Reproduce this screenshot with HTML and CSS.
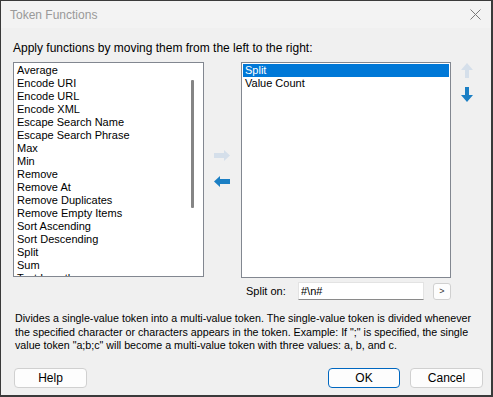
FILE: index.html
```html
<!DOCTYPE html>
<html lang="en">
<head>
    <meta charset="UTF-8">
    <title>Token Functions</title>
    <link rel="stylesheet" href="styles.css">
</head>
<body>
    <div class="window">
        <div class="titlebar">
            <span class="title">Token Functions</span>
            <svg class="close" width="11" height="11" viewBox="0 0 11 11">
                <path d="M0.5 0.5 L10.5 10.5 M10.5 0.5 L0.5 10.5" stroke="#7a7a7a" stroke-width="1" fill="none"/>
            </svg>
        </div>
        <div class="content">
            <div class="intro">Apply functions by moving them from the left to the right:</div>

            <div class="lists">
                <div class="listbox available">
                    <div class="items">
                        <div class="item">Average</div>
                        <div class="item">Encode URI</div>
                        <div class="item">Encode URL</div>
                        <div class="item">Encode XML</div>
                        <div class="item">Escape Search Name</div>
                        <div class="item">Escape Search Phrase</div>
                        <div class="item">Max</div>
                        <div class="item">Min</div>
                        <div class="item">Remove</div>
                        <div class="item">Remove At</div>
                        <div class="item">Remove Duplicates</div>
                        <div class="item">Remove Empty Items</div>
                        <div class="item">Sort Ascending</div>
                        <div class="item">Sort Descending</div>
                        <div class="item">Split</div>
                        <div class="item">Sum</div>
                        <div class="item">Text Length</div>
                    </div>
                    <div class="scrollbar"><div class="thumb"></div></div>
                </div>

                <div class="move-buttons">
                    <svg width="16" height="11" viewBox="0 0 16 11">
                        <polygon points="16,5.5 10,0 10,3 0,3 0,8 10,8 10,11" fill="#d5dfea"/>
                    </svg>
                    <svg width="16" height="11" viewBox="0 0 16 11">
                        <polygon points="0,5.5 6,0 6,3 16,3 16,8 6,8 6,11" fill="#1b7fc4"/>
                    </svg>
                </div>

                <div class="listbox selected-list">
                    <div class="item active">Split</div>
                    <div class="item">Value Count</div>
                </div>

                <div class="order-buttons">
                    <svg width="12" height="15" viewBox="0 0 12 15">
                        <polygon points="6,0 12,7 8,7 8,15 4,15 4,7 0,7" fill="#d5dfea"/>
                    </svg>
                    <svg width="12" height="15" viewBox="0 0 12 15">
                        <polygon points="4,0 8,0 8,8 12,8 6,15 0,8 4,8" fill="#1b7fc4"/>
                    </svg>
                </div>
            </div>

            <div class="split-row">
                <label class="split-label" for="split-on">Split on:</label>
                <input id="split-on" class="split-input" type="text" value="#\n#">
                <button class="small-btn">&gt;</button>
            </div>

            <p class="description">Divides a single-value token into a multi-value token. The single-value token is divided whenever the specified character or characters appears in the token. Example: If ";" is specified, the single value token "a;b;c" will become a multi-value token with three values: a, b, and c.</p>

            <div class="buttons">
                <button class="btn">Help</button>
                <div class="spacer"></div>
                <button class="btn default">OK</button>
                <button class="btn">Cancel</button>
            </div>
        </div>
    </div>
</body>
</html>
```

FILE: styles.css
```css
* {
    box-sizing: border-box;
}
body {
    margin: 0;
    font-family: "Liberation Sans", Arial, sans-serif;
    color: #000;
    background-color: #f0f0f0;
}
.window {
    width: 493px;
    height: 397px;
    border: 1px solid #3a3a3a;
    border-right-width: 2px;
    border-bottom-width: 2px;
    background-color: #f0f0f0;
    display: flex;
    flex-direction: column;
    overflow: hidden;
}
.titlebar {
    flex-shrink: 0;
    height: 27px;
    background-color: #f3f3f3;
    display: flex;
    align-items: center;
    justify-content: space-between;
    padding: 0 9px 0 9px;
}
.title {
    font-size: 12px;
    color: #999;
}
.close {
    margin-right: 1px;
}
.content {
    flex-shrink: 0;
    padding: 0 0 0 12px;
    font-size: 12px;
}
.intro {
    margin-top: 13px;
    line-height: 14px;
}
.lists {
    display: flex;
    margin-top: 7px;
    height: 215px;
}
.listbox {
    border: 1px solid #828790;
    background-color: #fff;
    font-size: 11px;
    overflow: hidden;
}
.available {
    width: 191px;
    display: flex;
}
.items {
    flex: 1;
    padding: 1px 0 0 3px;
}
.item {
    height: 13px;
    line-height: 13px;
    white-space: nowrap;
}
.scrollbar {
    width: 13px;
    padding: 17px 0 0 1px;
}
.thumb {
    width: 3px;
    height: 128px;
    background-color: #858585;
    border-radius: 1px;
}
.move-buttons {
    width: 37px;
    display: flex;
    flex-direction: column;
    align-items: center;
    padding-top: 88px;
    gap: 15px;
}
.move-buttons svg {
    margin-left: -1px;
}
.selected-list {
    width: 210px;
    height: 216px;
    padding: 1px;
}
.selected-list .item {
    padding-left: 2px;
}
.active {
    background-color: #0078d7;
    color: #fff;
}
.order-buttons {
    display: flex;
    flex-direction: column;
    padding: 1px 0 0 10px;
    gap: 9px;
}
.split-row {
    display: flex;
    align-items: center;
    margin-top: 5px;
    height: 18px;
}
.split-label {
    font-size: 11px;
    margin-left: 233px;
    width: 52px;
}
.split-input {
    width: 126px;
    height: 18px;
    border: 1px solid #e3e3e3;
    border-bottom-color: #8a8a8a;
    background-color: #fff;
    font-family: "Liberation Sans", Arial, sans-serif;
    font-size: 11px;
    padding: 0 2px;
    outline: none;
}
.small-btn {
    margin-left: 9px;
    width: 18px;
    height: 17px;
    padding: 0;
    border: 1px solid #d0d0d0;
    border-radius: 3px;
    background-color: #fdfdfd;
    font-family: "Liberation Sans", Arial, sans-serif;
    font-size: 9px;
    color: #333;
}
.description {
    margin: 12px 14px 0 2px;
    line-height: 13.5px;
    font-size: 10.7px;
}
.buttons {
    display: flex;
    margin-top: 15px;
    padding-right: 8px;
}
.spacer {
    flex: 1;
}
.btn {
    width: 73px;
    height: 20px;
    margin-left: 1px;
    border: 1px solid #d0d0d0;
    border-radius: 4px;
    background-color: #fdfdfd;
    font-family: "Liberation Sans", Arial, sans-serif;
    font-size: 12px;
    color: #000;
    padding: 0;
}
.btn.default {
    width: 72px;
    border-color: #0067c0;
    margin-right: 9px;
}
```
